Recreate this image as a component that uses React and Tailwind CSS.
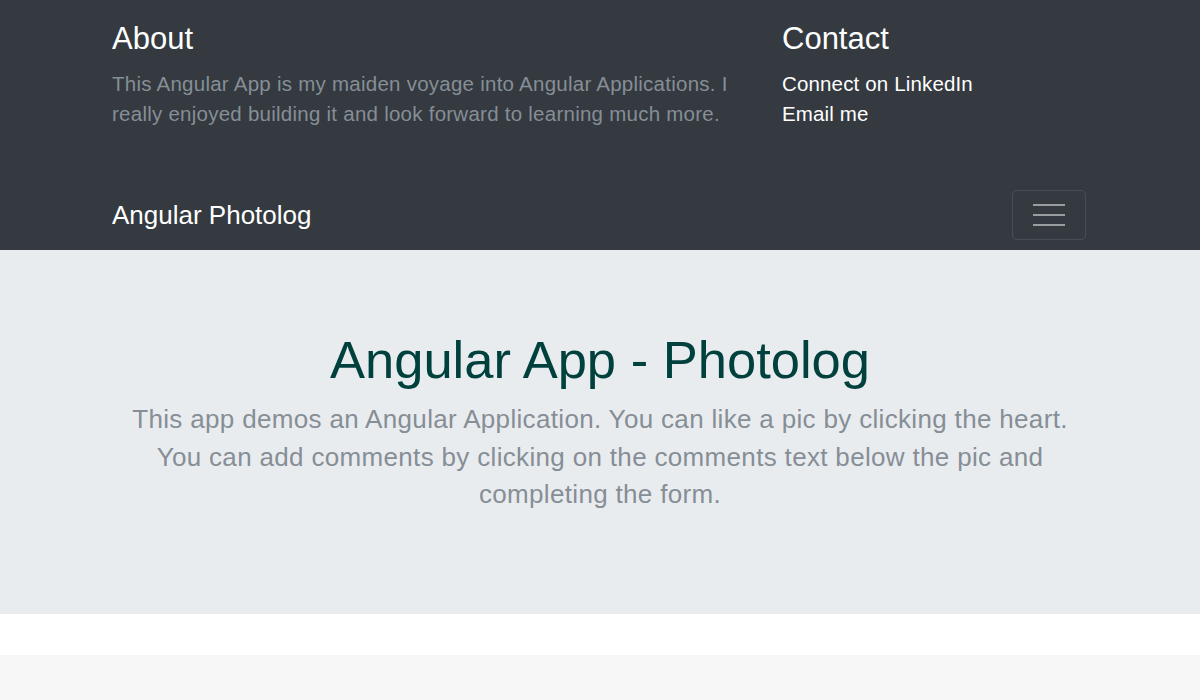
import React from "react";

const Header = () => {
  return (
    <header className="bg-[#343a40]">
      <div className="h-[180px]">
        <div className="w-[976px] mx-auto flex pt-[21px]">
          <div className="w-[639px]">
            <h4 className="text-[31px] leading-[36px] text-white mb-[12px]">About</h4>
            <p className="text-[20.5px] leading-[30px] tracking-[0.25px] text-[#868e96]">
              This Angular App is my maiden voyage into Angular Applications. I really enjoyed building it and look forward to learning much more.
            </p>
          </div>
          <div className="ml-[31px]">
            <h4 className="text-[31px] leading-[36px] text-white mb-[12px]">Contact</h4>
            <ul className="text-[20.5px] leading-[30px] tracking-[0.15px] text-white">
              <li><a href="#">Connect on LinkedIn</a></li>
              <li><a href="#">Email me</a></li>
            </ul>
          </div>
        </div>
      </div>
      <nav className="py-[10px]">
        <div className="w-[976px] mx-auto flex items-center justify-between">
          <a href="#" className="text-[26px] text-white">Angular Photolog</a>
          <button className="w-[74px] h-[50px] border border-white/10 rounded-[5px] flex items-center justify-center mr-[2px]">
            <svg width="32" height="24" viewBox="0 0 32 24">
              <path d="M0 2h32M0 12h32M0 22h32" stroke="rgba(255,255,255,0.5)" strokeWidth="2" />
            </svg>
          </button>
        </div>
      </nav>
    </header>
  );
};

export default function App() {
  return (
    <div className="min-h-[700px] bg-white" style={{ fontFamily: '"Liberation Sans", Arial, sans-serif' }}>
      <Header />
      <section className="bg-[#e9ecef] h-[364px] pt-[79px] text-center">
        <div className="w-[974px] mx-auto">
          <h1 className="text-[52.5px] leading-[62px] text-[#00403d] mb-[10px]">Angular App - Photolog</h1>
          <p className="text-[26px] leading-[37.5px] tracking-[0.33px] text-[#868e96]">
            This app demos an Angular Application. You can like a pic by clicking the heart. You can add comments by clicking on the comments text below the pic and completing the form.
          </p>
        </div>
      </section>
      <div className="h-[41px]" />
      <div className="bg-[#f7f7f7] h-[45px]" />
    </div>
  );
}
